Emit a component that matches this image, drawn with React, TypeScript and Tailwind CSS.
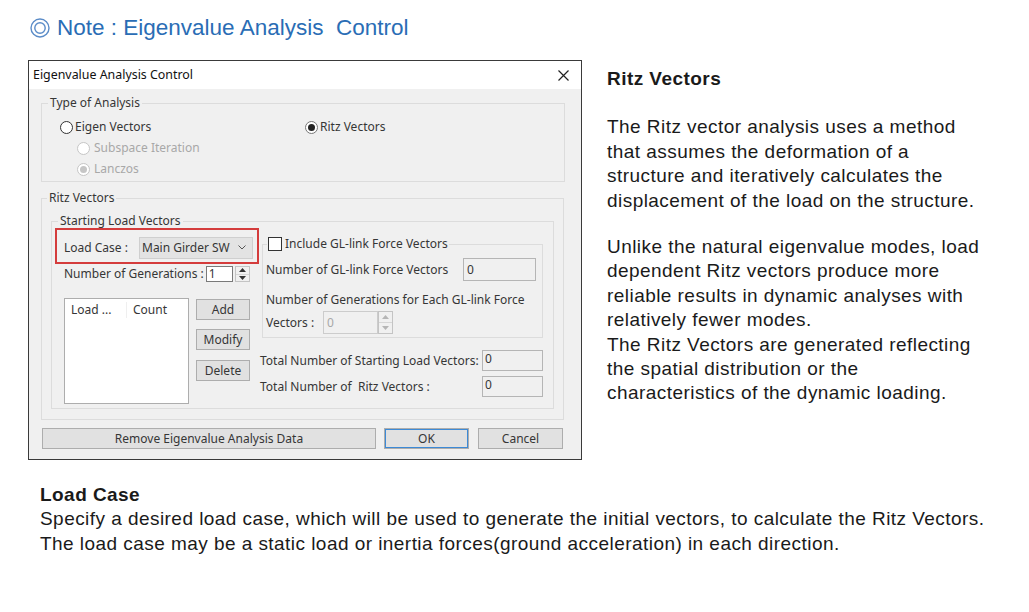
import React from "react";

const DLG = "font-['Noto_Sans',sans-serif] text-[12px] leading-[16px] text-[#363636] whitespace-nowrap";
const DOC = "font-['Liberation_Sans',Arial,sans-serif] text-[19px] leading-[24.4px] tracking-[0.45px] text-[#1a1a1a]";

function Radio({ checked = false, disabled = false }: { checked?: boolean; disabled?: boolean }) {
  return (
    <span
      className={`flex h-[13px] w-[13px] shrink-0 items-center justify-center rounded-full border bg-white ${
        disabled ? "border-[#c6c6c6]" : checked ? "border-[#777]" : "border-[#333]"
      }`}
    >
      {checked && (
        <span className={`h-[7px] w-[7px] rounded-full ${disabled ? "bg-[#c6c6c6]" : "bg-[#222]"}`} />
      )}
    </span>
  );
}

function Checkbox() {
  return <span className="block h-[14px] w-[14px] shrink-0 border border-[#333] bg-white" />;
}

function Btn({ label, className = "" }: { label: string; className?: string }) {
  return (
    <div
      className={`flex h-[21px] items-center justify-center border border-[#adadad] bg-[#e1e1e1] ${className}`}
    >
      {label}
    </div>
  );
}

function Spinner({ h, disabled = false }: { h: string; disabled?: boolean }) {
  const fill = disabled ? "#b5b5b5" : "#333";
  return (
    <div className={`flex w-[15px] flex-col border border-[#c4c4c4] bg-[#f0f0f0] ${h}`}>
      <div className="flex flex-1 items-center justify-center border-b border-[#d6d6d6]">
        <svg width="7" height="4" viewBox="0 0 7 4">
          <path d="M0 4 L3.5 0 L7 4 Z" fill={fill} />
        </svg>
      </div>
      <div className="flex flex-1 items-center justify-center">
        <svg width="7" height="4" viewBox="0 0 7 4">
          <path d="M0 0 L3.5 4 L7 0 Z" fill={fill} />
        </svg>
      </div>
    </div>
  );
}

function Dialog() {
  return (
    <div className={`flex h-[400px] w-[554px] shrink-0 flex-col border border-[#3a3a3a] ${DLG}`}>
      {/* title bar */}
      <div className="flex h-[28px] items-center justify-between bg-white pl-[4px] pr-[12px] text-[12.4px] text-[#111]">
        <span>Eigenvalue Analysis Control</span>
        <svg width="11" height="11" viewBox="0 0 11 11">
          <path d="M0.5 0.5 L10.5 10.5 M10.5 0.5 L0.5 10.5" stroke="#222" strokeWidth="1.2" />
        </svg>
      </div>

      <div className="flex flex-1 flex-col bg-[#f0f0f0]">
        {/* Type of Analysis */}
        <fieldset className="ml-[12px] mt-[6px] h-[87px] w-[524px] border border-[#dcdcdc]">
          <legend className="ml-[6px] px-[2px]">Type of Analysis</legend>
          <div className="mt-[8px] flex h-[16px] items-center pl-[18px]">
            <div className="flex w-[245px] items-center gap-[2px]">
              <Radio />
              <span>Eigen Vectors</span>
            </div>
            <div className="flex items-center gap-[2px]">
              <Radio checked />
              <span>Ritz Vectors</span>
            </div>
          </div>
          <div className="mt-[5px] flex h-[16px] items-center gap-[4px] pl-[35px] text-[#a8a8a8]">
            <Radio disabled />
            <span>Subspace Iteration</span>
          </div>
          <div className="mt-[5px] flex h-[16px] items-center gap-[4px] pl-[35px] text-[#a8a8a8]">
            <Radio checked disabled />
            <span>Lanczos</span>
          </div>
        </fieldset>

        {/* Ritz Vectors */}
        <fieldset className="ml-[12px] mt-[8px] h-[230px] w-[523px] border border-[#dcdcdc]">
          <legend className="ml-[5px] px-[2px]">Ritz Vectors</legend>

          <fieldset className="ml-[9px] mt-[7px] h-[196px] w-[503px] border border-[#dcdcdc]">
            <legend className="ml-[6px] px-[2px]">Starting Load Vectors</legend>

            <div className="flex">
              {/* left column */}
              <div className="flex w-[206px] shrink-0 flex-col">
                <div className="ml-[3px] mt-[-1px] flex h-[36px] w-[204px] items-center border-2 border-[#d43c3c] pl-[7px] pt-[3px]">
                  <span className="w-[75px] shrink-0">Load Case :</span>
                  <div className="flex h-[22px] w-[114px] items-center justify-between border border-[#cfcfcf] bg-[#e3e3e3] pl-[2px] pr-[6px]">
                    <span>Main Girder SW</span>
                    <svg width="8" height="5" viewBox="0 0 8 5">
                      <path d="M0.5 0.5 L4 4 L7.5 0.5" fill="none" stroke="#555" strokeWidth="1" />
                    </svg>
                  </div>
                </div>

                <div className="mt-[2px] flex h-[16px] items-center pl-[12px]">
                  <span className="shrink-0">Number of Generations :</span>
                  <div className="ml-[2px] flex h-[16px] w-[27px] shrink-0 items-center border border-[#7a7a7a] bg-white pl-[2px]">
                    1
                  </div>
                  <div className="ml-[2px] shrink-0">
                    <Spinner h="h-[16px]" />
                  </div>
                </div>

                <div className="mt-[16px] flex pl-[12px]">
                  <div className="h-[106px] w-[125px] shrink-0 border border-[#adadad] bg-white">
                    <div className="flex h-[22px] items-center">
                      <span className="w-[62px] border-r border-[#efefef] pl-[6px]">Load ...</span>
                      <span className="pl-[6px]">Count</span>
                    </div>
                  </div>
                  <div className="ml-[7px] flex flex-col">
                    <Btn label="Add" className="mt-[1px] w-[54px]" />
                    <Btn label="Modify" className="mt-[9px] w-[54px]" />
                    <Btn label="Delete" className="mt-[10px] w-[54px]" />
                  </div>
                </div>
              </div>

              {/* right column */}
              <div className="flex flex-col">
                <fieldset className="ml-[4px] mt-[7px] h-[102px] w-[281px] border border-[#dcdcdc]">
                  <legend className="ml-[4px] flex items-center gap-[3px] px-[1px]">
                    <Checkbox />
                    <span>Include GL-link Force Vectors</span>
                  </legend>
                  <div className="mt-[6px] flex h-[23px] items-center pl-[3px]">
                    <span className="w-[197px] shrink-0">Number of GL-link Force Vectors</span>
                    <div className="flex h-[23px] w-[73px] items-center border border-[#b5b5b5] bg-[#f0f0f0] pl-[3px]">
                      0
                    </div>
                  </div>
                  <div className="mt-[11px] h-[16px] pl-[3px]">Number of Generations for Each GL-link Force</div>
                  <div className="mt-[3px] flex h-[23px] items-center pl-[3px]">
                    <span className="w-[57px] shrink-0">Vectors :</span>
                    <div className="flex h-[23px] w-[55px] items-center border border-[#cccccc] bg-[#f0f0f0] pl-[3px] text-[#a8a8a8]">
                      0
                    </div>
                    <Spinner h="h-[23px]" disabled />
                  </div>
                </fieldset>

                <div className="ml-[2px] mt-[12px] flex h-[21px] items-center">
                  <span className="w-[220px] shrink-0">Total Number of Starting Load Vectors:</span>
                  <div className="ml-[2px] flex h-[21px] w-[61px] items-start border border-[#b5b5b5] bg-[#f0f0f0] pl-[2px]">
                    0
                  </div>
                </div>
                <div className="ml-[2px] mt-[5px] flex h-[21px] items-center">
                  <span className="w-[220px] shrink-0">Total Number of&nbsp; Ritz Vectors :</span>
                  <div className="ml-[2px] flex h-[21px] w-[61px] items-start border border-[#b5b5b5] bg-[#f0f0f0] pl-[2px]">
                    0
                  </div>
                </div>
              </div>
            </div>
          </fieldset>
        </fieldset>

        {/* bottom buttons */}
        <div className="ml-[13px] mt-[8px] flex">
          <Btn label="Remove Eigenvalue Analysis Data" className="w-[334px]" />
          <Btn label="OK" className="ml-[8px] w-[85px] border-[#3d8ad6] shadow-[inset_0_0_0_1px_#3d8ad6]" />
          <Btn label="Cancel" className="ml-[9px] w-[85px]" />
        </div>
      </div>
    </div>
  );
}

export default function App() {
  return (
    <div className="h-[612px] w-[1029px] overflow-hidden bg-white">
      {/* heading */}
      <div className="flex h-[45px] items-center pl-[30px] pt-[10px] font-['Liberation_Sans',Arial,sans-serif] text-[22.5px] text-[#2a6db5]">
        <svg width="20" height="20" viewBox="0 0 20 20" className="mr-[7px] shrink-0">
          <circle cx="10" cy="10" r="9" fill="none" stroke="#5b8cc8" strokeWidth="1.4" />
          <circle cx="10" cy="10" r="5.2" fill="none" stroke="#5b8cc8" strokeWidth="1.4" />
        </svg>
        <span>Note : Eigenvalue Analysis&nbsp; Control</span>
      </div>

      <div className="mt-[15px] flex items-start">
        <div className="ml-[28px]">
          <Dialog />
        </div>

        <div className={`ml-[25px] pt-[7px] ${DOC}`}>
          <div className="font-bold">Ritz Vectors</div>
          <div className="mt-[24px] whitespace-nowrap">
            <div>The Ritz vector analysis uses a method</div>
            <div>that assumes the deformation of a</div>
            <div>structure and iteratively calculates the</div>
            <div>displacement of the load on the structure.</div>
          </div>
          <div className="mt-[22px] whitespace-nowrap">
            <div>Unlike the natural eigenvalue modes, load</div>
            <div>dependent Ritz vectors produce more</div>
            <div>reliable results in dynamic analyses with</div>
            <div>relatively fewer modes.</div>
            <div>The Ritz Vectors are generated reflecting</div>
            <div>the spatial distribution or the</div>
            <div>characteristics of the dynamic loading.</div>
          </div>
        </div>
      </div>

      <div className={`ml-[40px] mt-[23px] whitespace-nowrap ${DOC}`}>
        <div className="font-bold">Load Case</div>
        <div>Specify a desired load case, which will be used to generate the initial vectors, to calculate the Ritz Vectors.</div>
        <div>The load case may be a static load or inertia forces(ground acceleration) in each direction.</div>
      </div>
    </div>
  );
}
